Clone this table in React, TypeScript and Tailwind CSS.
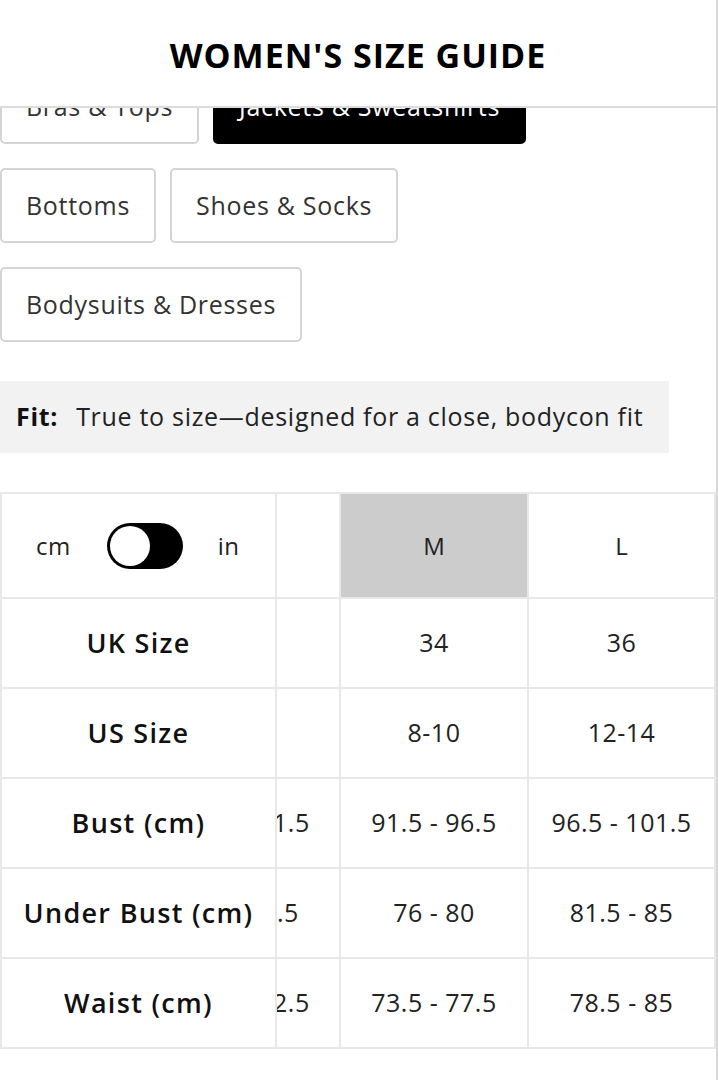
const FONT = "font-['Open_Sans','Lato',sans-serif]";

const tabs = [
  [
    { label: "Bras & Tops", active: false },
    { label: "Jackets & Sweatshirts", active: true },
  ],
  [
    { label: "Bottoms", active: false },
    { label: "Shoes & Socks", active: false },
  ],
  [{ label: "Bodysuits & Dresses", active: false }],
];

const rows = [
  { name: "UK Size", s: "32", m: "34", l: "36" },
  { name: "US Size", s: "4-6", m: "8-10", l: "12-14" },
  { name: "Bust (cm)", s: "86.5 - 91.5", m: "91.5 - 96.5", l: "96.5 - 101.5" },
  { name: "Under Bust (cm)", s: "71 - 75.5", m: "76 - 80", l: "81.5 - 85" },
  { name: "Waist (cm)", s: "68.5 - 72.5", m: "73.5 - 77.5", l: "78.5 - 85" },
];

function Tab({ label, active }: { label: string; active: boolean }) {
  return (
    <button
      className={
        active
          ? "h-[75px] px-6 rounded-[5px] bg-black text-white text-[25px] tracking-[0.7px] border-2 border-black"
          : "h-[75px] px-6 rounded-[5px] bg-white text-[#333] text-[25px] tracking-[0.7px] border-2 border-[#d4d4d4]"
      }
    >
      {label}
    </button>
  );
}

// the S column is scrolled mostly under the sticky first column
function Peek({ text }: { text: string }) {
  return (
    <div className="border-r-2 border-b-2 border-[#e8e8e8] overflow-hidden flex items-center">
      <div className="w-[188px] shrink-0 ml-[-124px] text-center text-[25px] tracking-[0.5px] text-[#222]">{text}</div>
    </div>
  );
}

export default function App() {
  return (
    <div className={`relative w-[718px] h-[1080px] overflow-hidden bg-white border-r-2 border-[#d8d8d8] ${FONT}`}>
      <header className="absolute top-0 inset-x-0 h-[108px] bg-white border-b-2 border-[#dcdcdc] z-10 flex items-center justify-center">
        <h1 className="text-[34px] font-bold text-black tracking-[1px] mt-[4px]">WOMEN'S SIZE GUIDE</h1>
      </header>

      <div className="pt-[69px] flex flex-col gap-6">
        {tabs.map((row, i) => (
          <div key={i} className="flex gap-[14px]">
            {row.map((t) => (
              <Tab key={t.label} {...t} />
            ))}
          </div>
        ))}
      </div>

      <div className="mt-[39px] w-[669px] h-[72px] bg-[#f2f2f2] flex items-center pl-4 text-[25px] tracking-[0.7px] text-[#222]">
        <span className="font-bold text-[#111] mr-[18px]">Fit:</span>
        <span>True to size—designed for a close, bodycon fit</span>
      </div>

      <div className="mt-[39px] w-[716px] grid grid-cols-[275px_64px_188px_187px] border-t-2 border-l-2 border-[#e8e8e8]">
        <div className="h-[105px] border-r-2 border-b-2 border-[#e8e8e8] flex items-center pl-[34px] text-[24px] tracking-[0.5px] text-[#222]">
          <span>cm</span>
          <div className="ml-[36px] w-[76px] h-[46px] rounded-full bg-black p-[3px] flex">
            <div className="w-[40px] h-[40px] rounded-full bg-white"></div>
          </div>
          <span className="ml-[35px]">in</span>
        </div>
        <div className="border-r-2 border-b-2 border-[#e8e8e8]"></div>
        <div className="border-r-2 border-b-2 border-[#e8e8e8] bg-[#cccccc] flex items-center justify-center text-[24px] text-[#222]">M</div>
        <div className="border-r-2 border-b-2 border-[#e8e8e8] flex items-center justify-center text-[24px] text-[#222]">L</div>

        {rows.map((r) => (
          <>
            <div key={r.name} className="h-[90px] border-r-2 border-b-2 border-[#e8e8e8] flex items-center justify-center text-[27px] tracking-[1.3px] font-semibold text-[#111] whitespace-nowrap">
              {r.name}
            </div>
            <Peek text={r.s} />
            <div className="border-r-2 border-b-2 border-[#e8e8e8] flex items-center justify-center text-[25px] tracking-[0.5px] text-[#222]">{r.m}</div>
            <div className="border-r-2 border-b-2 border-[#e8e8e8] flex items-center justify-center text-[25px] tracking-[0.5px] text-[#222]">{r.l}</div>
          </>
        ))}
      </div>
    </div>
  );
}
